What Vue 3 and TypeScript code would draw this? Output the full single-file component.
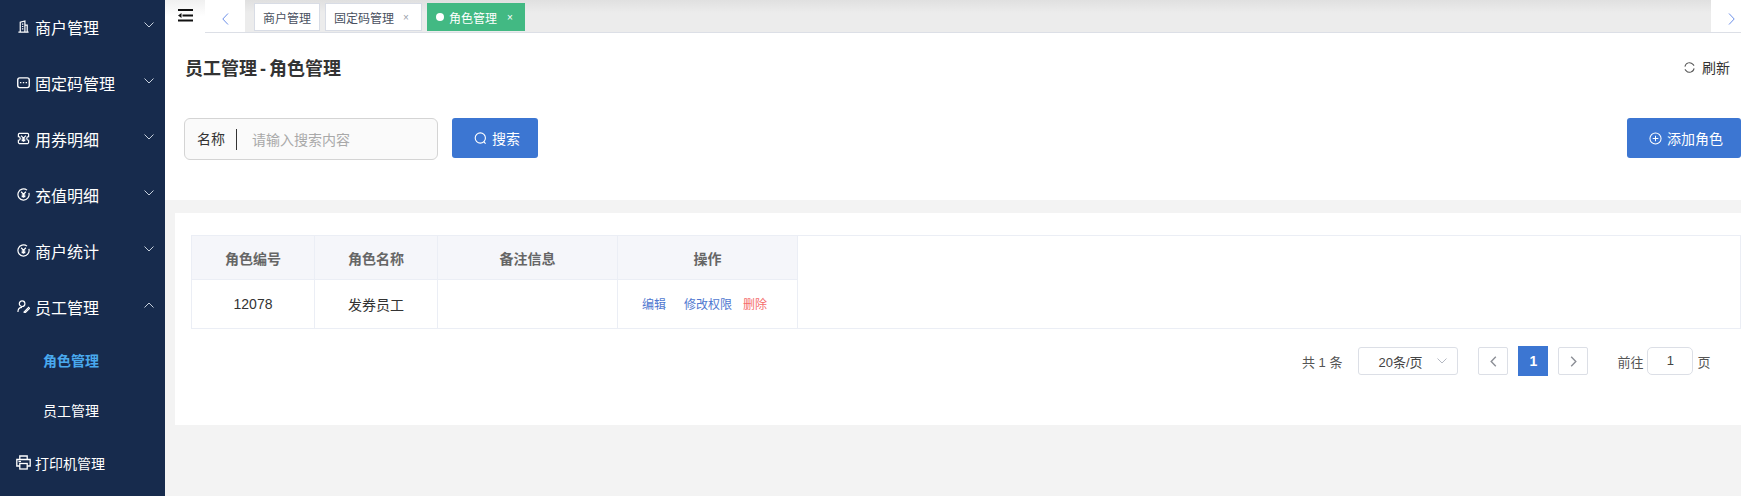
<script setup lang="ts">
interface MenuItem {
  label: string
  icon: string
  open?: boolean
}

const menus: MenuItem[] = [
  { label: '商户管理', icon: 'shop' },
  { label: '固定码管理', icon: 'code' },
  { label: '用券明细', icon: 'coupon' },
  { label: '充值明细', icon: 'yuan' },
  { label: '商户统计', icon: 'yuan' },
  { label: '员工管理', icon: 'staff', open: true },
]
</script>

<template>
  <div class="layout">
    <aside class="sidebar">
      <div v-for="m in menus" :key="m.label" class="menu-item">
        <svg class="menu-icon" viewBox="0 0 14 14" fill="none" stroke="currentColor" stroke-width="1.3">
          <template v-if="m.icon === 'shop'">
            <path d="M3.5 12.500V2.400L8.500 1v11.500M8.500 5.500h2.500v7M1.500 13h11M5.300 4.500h1.500M5.300 7h1.500M5.300 9.500h1.500" />
          </template>
          <template v-else-if="m.icon === 'code'">
            <rect x=".8" y="2" width="12.400" height="10.500" rx="2.200" stroke-width="1.500" />
            <path d="M3.200 7.200h1.500M6.250 7.200h1.500M9.300 7.200h1.500" stroke-width="1.400" />
          </template>
          <template v-else-if="m.icon === 'coupon'">
            <path d="M2.500 1.500h9a1.500 1.500 0 0 1 1 1V5a2 2 0 0 0 0 4v2.500a1.500 1.500 0 0 1-1 1h-9a1.500 1.500 0 0 1-1-1V9a2 2 0 0 0 0-4V2.500a1.500 1.500 0 0 1 1-1z" />
            <path d="M4.500 4 7 6.800 9.500 4M7 6.800v3.700M5 7.600h4M5 9.200h4" />
          </template>
          <template v-else-if="m.icon === 'yuan'">
            <path d="M10.800 2.300A6 6 0 1 0 12.800 5.300" />
            <path d="M4.500 4 7 6.800 9.500 4M7 6.800v3.700M5 7.600h4M5 9.200h4" stroke-width="1.400" />
          </template>
          <template v-else>
            <circle cx="5.500" cy="4" r="3" />
            <path d="M1 13c0-3 1.800-5 4.500-5M7.500 13l5-5 1 1-5 5z" />
          </template>
        </svg>
        <span class="menu-label">{{ m.label }}</span>
        <svg class="menu-arrow" viewBox="0 0 10 6" fill="none" stroke="currentColor" stroke-width="1">
          <path :d="m.open ? 'M.5 5.500 5 1l4.500 4.500' : 'M.5.500 5 5l4.500-4.500'" />
        </svg>
      </div>
      <div class="sub-item active">角色管理</div>
      <div class="sub-item">员工管理</div>
      <div class="menu-item last">
        <svg class="menu-icon print" viewBox="0 0 15 15" fill="none" stroke="currentColor" stroke-width="1.300">
          <path d="M3.800 4.500V1h7.400v3.500M3.800 11H.8V4.500h13.400V11h-3" />
          <rect x="3.800" y="8.500" width="7.400" height="5.500" />
          <path d="M2.500 6.500h2.500" />
        </svg>
        <span class="menu-label">打印机管理</span>
      </div>
    </aside>

    <main class="main">
      <div class="tabs-bar">
        <div class="hamburger">
          <svg width="15" height="13" viewBox="0 0 15 13" fill="#111">
            <rect x="0" y="0" width="15" height="2" />
            <rect x="4.500" y="5.500" width="10.500" height="2" />
            <path d="M0 6.500l3.500-2.500v5z" />
            <rect x="0" y="10.500" width="15" height="2" />
          </svg>
        </div>
        <div class="tab-nav">
          <svg width="7" height="12" viewBox="0 0 7 12" fill="none" stroke="#6c8fe8" stroke-width="1">
            <path d="M6 .5.800 6 6 11.500" />
          </svg>
        </div>
        <div class="tabs">
          <div class="tab">商户管理</div>
          <div class="tab">固定码管理<span class="tab-close">×</span></div>
          <div class="tab current"><i class="tab-dot"></i>角色管理<span class="tab-close">×</span></div>
        </div>
        <div class="tab-nav right">
          <svg width="7" height="12" viewBox="0 0 7 12" fill="none" stroke="#6c8fe8" stroke-width="1">
            <path d="M1 .5 6.200 6 1 11.500" />
          </svg>
        </div>
      </div>

      <section class="panel">
        <div class="panel-head">
          <h1>员工管理 - 角色管理</h1>
          <div class="refresh">
            <svg width="11" height="11" viewBox="0 0 12 12" fill="none" stroke="#555" stroke-width="1.100">
              <path d="M1 5A5 5 0 0 1 9.800 2.600L11 4M11 7A5 5 0 0 1 2.200 9.400L1 8" />
            </svg>
            刷新
          </div>
        </div>
        <div class="toolbar">
          <div class="search-box">
            <span class="search-label">名称</span>
            <span class="search-hint">请输入搜索内容</span>
          </div>
          <button class="btn search-btn">
            <svg width="13" height="13" viewBox="0 0 14 14" fill="none" stroke="#fff" stroke-width="1.200">
              <circle cx="6.800" cy="6.500" r="5.500" />
              <path d="M10.500 10.500l2 2" />
            </svg>
            搜索
          </button>
          <button class="btn add-btn">
            <svg width="13" height="13" viewBox="0 0 14 14" fill="none" stroke="#fff" stroke-width="1.100">
              <circle cx="7" cy="7" r="6" />
              <path d="M7 4v6M4 7h6" />
            </svg>
            添加角色
          </button>
        </div>
      </section>

      <section class="list-wrap">
        <div class="list-card">
          <div class="table">
            <div class="cell head">角色编号</div>
            <div class="cell head">角色名称</div>
            <div class="cell head">备注信息</div>
            <div class="cell head">操作</div>
            <div class="cell filler"></div>
            <div class="cell">12078</div>
            <div class="cell">发券员工</div>
            <div class="cell"></div>
            <div class="cell ops">
              <a class="op">编辑</a>
              <a class="op">修改权限</a>
              <a class="op danger">删除</a>
            </div>
          </div>

          <div class="pager">
            <span>共 1 条</span>
            <div class="page-size">
              20条/页
              <svg width="10" height="6" viewBox="0 0 10 6" fill="none" stroke="#b4b8c2" stroke-width="1">
                <path d="M.5.500 5 5l4.500-4.500" />
              </svg>
            </div>
            <div class="page-btn">
              <svg width="7" height="11" viewBox="0 0 7 11" fill="none" stroke="#8c8f96" stroke-width="1.400">
                <path d="M5.800.800 1.200 5.500l4.600 4.700" />
              </svg>
            </div>
            <div class="page-num">1</div>
            <div class="page-btn">
              <svg width="7" height="11" viewBox="0 0 7 11" fill="none" stroke="#8c8f96" stroke-width="1.400">
                <path d="M1.200.800 5.800 5.500l-4.600 4.700" />
              </svg>
            </div>
            <div class="jump">
              前往
              <div class="jump-input">1</div>
              页
            </div>
          </div>
        </div>
      </section>
    </main>
  </div>
</template>

<style>
html,
body {
  margin: 0;
  background: #f3f3f3;
}
</style>

<style scoped>
.layout {
  display: flex;
  width: 1741px;
  height: 496px;
  overflow: hidden;
  font-family: "Liberation Sans", "Noto Sans CJK SC", sans-serif;
  font-size: 13px;
  color: #333;
}

.sidebar {
  flex: 0 0 165px;
  background: #172b4d;
  color: #fff;
}

.menu-item {
  display: flex;
  align-items: center;
  height: 56px;
  padding: 0 0 3px 17px;
  box-sizing: border-box;
  font-size: 16px;
}

.menu-icon {
  width: 13px;
  height: 13px;
  margin-right: 5px;
}

.menu-item.last {
  padding-left: 16px;
  font-size: 14px;
}

.menu-icon.print {
  width: 15px;
  height: 15px;
  margin-right: 4px;
}

.menu-arrow {
  width: 10px;
  height: 6px;
  margin-left: auto;
  margin-right: 11px;
  margin-bottom: 3px;
  color: #c6d0dc;
}

.sub-item {
  height: 50px;
  line-height: 50px;
  padding-left: 43px;
  font-size: 14px;
}

.sub-item.active {
  color: #49a9ee;
  font-weight: bold;
}

.main {
  flex: 1;
  min-width: 0;
}

.tabs-bar {
  display: flex;
  height: 33px;
  background: linear-gradient(#e0e0e0, #ececec 40%);
  border-bottom: 1px solid #dcdfe6;
  box-sizing: border-box;
}

.hamburger {
  flex: 0 0 40px;
  height: 33px;
  display: flex;
  justify-content: center;
  padding-top: 9px;
  box-sizing: border-box;
  background: linear-gradient(#f0f0f0, #fff 50%);
}

.tab-nav {
  flex: 0 0 40px;
  display: flex;
  align-items: center;
  justify-content: center;
  padding-top: 5px;
  box-sizing: border-box;
  background: #fff;
}

.tab-nav.right {
  flex-basis: 30px;
  margin-left: auto;
  padding-left: 10px;
}

.tabs {
  display: flex;
  align-items: flex-start;
  gap: 5px;
  padding: 3px 0 0 9px;
}

.tab {
  display: flex;
  align-items: center;
  height: 28px;
  padding: 0 8px;
  box-sizing: border-box;
  background: #fff;
  border: 1px solid #d8dce5;
  font-size: 12px;
  color: #495060;
}

.tab.current {
  background: #42b983;
  border-color: #42b983;
  color: #fff;
}

.tab-dot {
  width: 8px;
  height: 8px;
  border-radius: 50%;
  background: #fff;
  margin-right: 5px;
}

.tab-close {
  margin: 0 4px 0 9px;
  font-size: 10px;
  color: #9aa0aa;
}

.current .tab-close {
  margin-right: 3px;
  margin-left: 10px;
  color: #fff;
}

.panel {
  background: #fff;
  height: 167px;
  padding-left: 19px;
}

.panel-head {
  display: flex;
  align-items: center;
  justify-content: space-between;
  height: 68px;
  padding-right: 11px;
}

.panel-head h1 {
  margin: 0 0 0 1px;
  font-size: 18px;
  font-weight: bold;
  word-spacing: -2px;
  color: #333;
}

.refresh {
  display: flex;
  align-items: center;
  gap: 7px;
  font-size: 14px;
}

.toolbar {
  display: flex;
  align-items: flex-start;
  margin-top: 17px;
}

.search-box {
  display: flex;
  align-items: center;
  width: 254px;
  height: 42px;
  box-sizing: border-box;
  background: #fafafa;
  border: 1px solid #d4d4d4;
  border-radius: 6px;
  padding-left: 12px;
  font-size: 14px;
}

.search-label {
  padding-right: 11px;
  line-height: 21px;
  border-right: 1px solid #333;
}

.search-hint {
  margin-left: 15px;
  color: #a9a9a9;
}

.btn {
  display: flex;
  align-items: center;
  justify-content: center;
  gap: 5px;
  height: 40px;
  background: #3c76d2;
  border: none;
  border-radius: 3px;
  color: #fff;
  font: inherit;
  font-size: 14px;
  padding: 0 0 0 4px;
}

.search-btn {
  width: 86px;
  margin-left: 14px;
}

.add-btn {
  width: 114px;
  margin-left: auto;
}

.list-wrap {
  padding: 13px 0 0 10px;
}

.list-card {
  background: #fff;
  height: 212px;
  padding: 22px 0 0 16px;
  box-sizing: border-box;
}

.table {
  display: grid;
  grid-template-columns: 123px 123px 180px 180px 1fr;
  grid-template-rows: 44px 49px;
  border-top: 1px solid #ebeef5;
  border-left: 1px solid #ebeef5;
  font-size: 14px;
}

.cell {
  display: flex;
  align-items: center;
  justify-content: center;
  box-sizing: border-box;
  border-right: 1px solid #ebeef5;
  border-bottom: 1px solid #ebeef5;
}

.cell.head {
  background: #f5f6fa;
  font-weight: bold;
  color: #666;
}

.filler {
  grid-row: 1 / span 2;
  grid-column: 5;
}

.ops {
  padding: 0 6px 2px 0;
  font-size: 12px;
}

.op {
  color: #4f78d0;
  margin-right: 11px;
}

.op:first-child {
  margin-right: 18px;
}

.op.danger {
  margin-right: 0;
  color: #f56c6c;
}

.pager {
  display: flex;
  align-items: center;
  height: 30px;
  margin-top: 17px;
  padding-left: 1111px;
  color: #555;
}

.page-size {
  display: flex;
  align-items: center;
  justify-content: space-between;
  width: 100px;
  height: 28px;
  box-sizing: border-box;
  margin-left: 16px;
  padding: 0 10px 0 19px;
  border: 1px solid #dcdfe6;
  border-radius: 3px;
  color: #444;
}

.page-btn {
  display: flex;
  align-items: center;
  justify-content: center;
  width: 30px;
  height: 28px;
  box-sizing: border-box;
  margin-left: 20px;
  border: 1px solid #dcdfe6;
  border-radius: 2px;
}

.page-btn + .page-num {
  margin-left: 10px;
}

.page-num + .page-btn {
  margin-left: 10px;
}

.page-num {
  width: 30px;
  height: 30px;
  line-height: 30px;
  text-align: center;
  background: #3c76d2;
  color: #fff;
  font-size: 14px;
  font-weight: bold;
}

.jump {
  display: flex;
  align-items: center;
  gap: 4px;
  margin-left: 29px;
}

.jump-input {
  width: 46px;
  height: 28px;
  line-height: 26px;
  box-sizing: border-box;
  text-align: center;
  border: 1px solid #dcdfe6;
  border-radius: 5px;
  color: #444;
}
</style>
